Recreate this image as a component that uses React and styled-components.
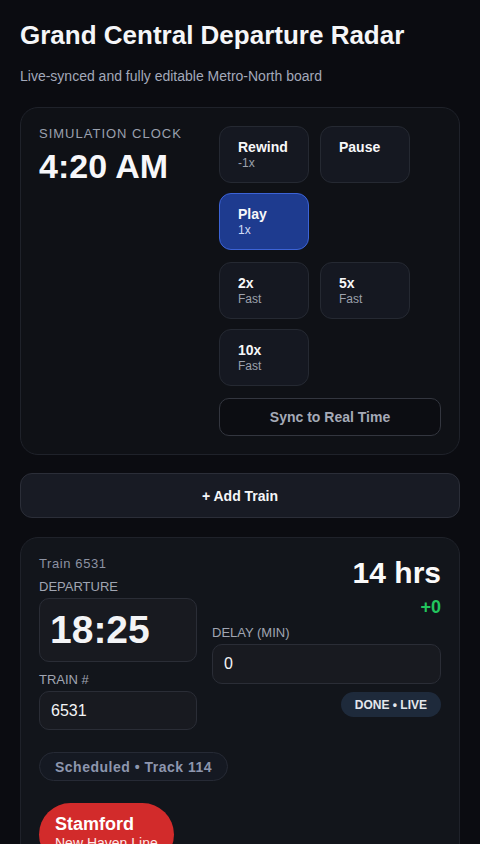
import React from "react";
import styled, { createGlobalStyle } from "styled-components";

const GlobalStyle = createGlobalStyle`
  html, body {
    margin: 0;
    background: #0b0c11;
  }
  body {
    font-family: "Liberation Sans", Arial, sans-serif;
    color: #f3f4f6;
  }
`;

const Page = styled.div`
  padding: 20px 20px 40px;
  display: flex;
  flex-direction: column;
`;

const Title = styled.h1`
  margin: 0;
  font-size: 26px;
  line-height: 30px;
  font-weight: 700;
  color: #f5f6f8;
`;

const Subtitle = styled.p`
  margin: 16px 0 21px;
  font-size: 14px;
  line-height: 20px;
  color: #a3a9ba;
`;

const Card = styled.section`
  background: ${(p) => p.$bg || "#0f1116"};
  border: 1px solid #1f222a;
  border-radius: 18px;
  padding: 18px;
`;

const ClockGrid = styled.div`
  display: grid;
  grid-template-columns: 1fr 222px;
`;

const Caps = styled.div`
  font-size: 13px;
  line-height: 15px;
  letter-spacing: 1px;
  text-transform: uppercase;
  color: #9aa0ae;
`;

const ClockTime = styled.div`
  margin-top: 6px;
  font-size: 34px;
  line-height: 38px;
  font-weight: 700;
  color: #f7f7f9;
`;

const Controls = styled.div`
  display: flex;
  flex-direction: column;
  gap: 12px;
`;

const Group = styled.div`
  display: flex;
  flex-wrap: wrap;
  gap: 10px 11px;
`;

const Ctl = styled.button`
  width: 90px;
  height: 57px;
  box-sizing: border-box;
  padding: 12px 18px 0;
  display: flex;
  flex-direction: column;
  align-items: flex-start;
  border-radius: 12px;
  border: 1px solid ${(p) => (p.$active ? "#3c63d6" : "#252932")};
  background: ${(p) => (p.$active ? "#1e3b8f" : "#151821")};
  font-family: inherit;
  color: #f7f7f9;
  text-align: left;
`;

const CtlName = styled.span`
  font-size: 14px;
  line-height: 17px;
  font-weight: 700;
`;

const CtlSub = styled.span`
  font-size: 12px;
  line-height: 14px;
  color: ${(p) => (p.$active ? "#d3dcf7" : "#9ca1ad")};
`;

const SyncButton = styled.button`
  height: 38px;
  border-radius: 10px;
  border: 1px solid #33363f;
  background: #0c0d12;
  font-family: inherit;
  font-size: 14px;
  font-weight: 700;
  color: #a5aab7;
`;

const AddButton = styled.button`
  margin: 18px 0 19px;
  height: 45px;
  border-radius: 12px;
  border: 1px solid #2b2e38;
  background: #181b24;
  font-family: inherit;
  font-size: 14px;
  font-weight: 700;
  color: #f5f6f8;
`;

const TrainGrid = styled.div`
  display: grid;
  grid-template-columns: 158px 1fr;
  column-gap: 15px;
`;

const Col = styled.div`
  display: flex;
  flex-direction: column;
`;

const TrainId = styled.div`
  font-size: 13px;
  line-height: 15px;
  letter-spacing: 0.6px;
  color: #8c92a2;
`;

const Label = styled.div`
  margin: ${(p) => p.$m || "0"};
  font-size: 13px;
  line-height: 15px;
  text-transform: uppercase;
  color: #a0a5b2;
`;

const Field = styled.div`
  box-sizing: border-box;
  height: ${(p) => p.$h || "40px"};
  display: flex;
  align-items: center;
  padding: 0 ${(p) => p.$pad || "11px"};
  border-radius: 10px;
  border: 1px solid #2a2d36;
  background: #181a20;
  font-size: ${(p) => p.$size || "16px"};
  font-weight: ${(p) => (p.$bold ? 700 : 400)};
  color: #f3f4f6;
`;

const Hours = styled.div`
  align-self: flex-end;
  font-size: 30px;
  line-height: 34px;
  font-weight: 700;
  color: #fafafa;
`;

const Delta = styled.div`
  align-self: flex-end;
  margin-top: 7px;
  font-size: 18px;
  line-height: 20px;
  font-weight: 700;
  color: #22c55e;
`;

const LivePill = styled.div`
  align-self: flex-end;
  margin-top: 8px;
  padding: 0 14px;
  height: 25px;
  display: flex;
  align-items: center;
  border-radius: 999px;
  background: #1e2a3b;
  font-size: 12px;
  font-weight: 700;
  color: #e4e7ec;
`;

const TrackPill = styled.div`
  align-self: flex-start;
  margin-top: 22px;
  height: 29px;
  box-sizing: border-box;
  padding: 0 15px;
  display: flex;
  align-items: center;
  border-radius: 999px;
  border: 1px solid #262a35;
  background: #151922;
  font-size: 14px;
  font-weight: 700;
  letter-spacing: 0.5px;
  color: #8d96ae;
`;

const Destination = styled.div`
  align-self: flex-start;
  margin-top: 22px;
  padding: 11px 16px 14px;
  border-radius: 32px;
  background: #d22b2b;
  display: flex;
  flex-direction: column;
`;

const DestName = styled.span`
  font-size: 18px;
  line-height: 20px;
  font-weight: 700;
  color: #fff;
`;

const DestLine = styled.span`
  font-size: 14px;
  line-height: 18px;
  color: #fde8e8;
`;

const controlGroups = [
  [
    { name: "Rewind", sub: "-1x" },
    { name: "Pause" },
    { name: "Play", sub: "1x", active: true },
  ],
  [
    { name: "2x", sub: "Fast" },
    { name: "5x", sub: "Fast" },
    { name: "10x", sub: "Fast" },
  ],
];

export default function App() {
  return (
    <>
      <GlobalStyle />
      <Page>
        <Title>Grand Central Departure Radar</Title>
        <Subtitle>Live-synced and fully editable Metro-North board</Subtitle>

        <Card>
          <ClockGrid>
            <div>
              <Caps>Simulation Clock</Caps>
              <ClockTime>4:20 AM</ClockTime>
            </div>
            <Controls>
              {controlGroups.map((group, i) => (
                <Group key={i}>
                  {group.map((c) => (
                    <Ctl key={c.name} $active={c.active}>
                      <CtlName>{c.name}</CtlName>
                      {c.sub && <CtlSub $active={c.active}>{c.sub}</CtlSub>}
                    </Ctl>
                  ))}
                </Group>
              ))}
              <SyncButton>Sync to Real Time</SyncButton>
            </Controls>
          </ClockGrid>
        </Card>

        <AddButton>+ Add Train</AddButton>

        <Card $bg="#12151b">
          <TrainGrid>
            <Col>
              <TrainId>Train 6531</TrainId>
              <Label $m="8px 0 4px">Departure</Label>
              <Field $h="64px" $size="39px" $pad="10px" $bold>
                18:25
              </Field>
              <Label $m="10px 0 4px">Train #</Label>
              <Field $h="39px">6531</Field>
            </Col>
            <Col>
              <Hours>14 hrs</Hours>
              <Delta>+0</Delta>
              <Label $m="8px 0 4px">Delay (min)</Label>
              <Field>0</Field>
              <LivePill>DONE • LIVE</LivePill>
            </Col>
          </TrainGrid>
          <Col>
            <TrackPill>Scheduled • Track 114</TrackPill>
            <Destination>
              <DestName>Stamford</DestName>
              <DestLine>New Haven Line</DestLine>
            </Destination>
          </Col>
        </Card>
      </Page>
    </>
  );
}
